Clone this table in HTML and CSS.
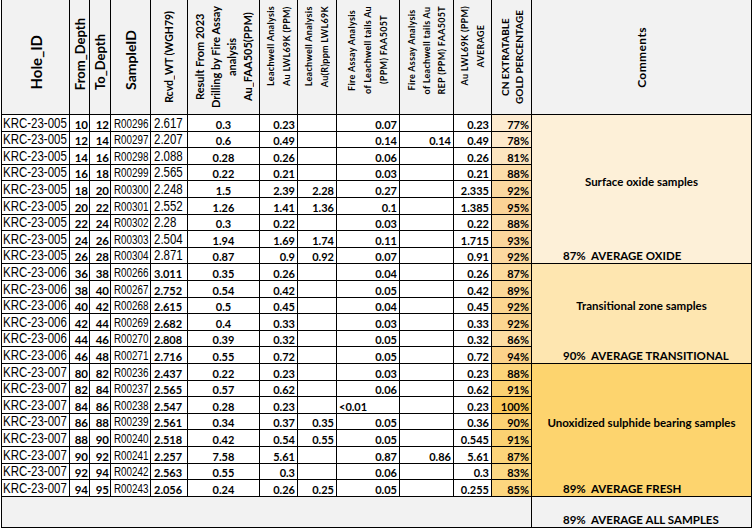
FILE: index.html
```html
<!DOCTYPE html>
<html lang="en">
<head>
<meta charset="utf-8">
<title>Leachwell results</title>
<link rel="stylesheet" href="styles.css">
</head>
<body>
<div class="sheet">
  <div class="h bot"><div class="v s15">Hole_ID</div></div>
  <div class="h bot"><div class="v s13">From_Depth</div></div>
  <div class="h bot"><div class="v s13">To_Depth</div></div>
  <div class="h bot"><div class="v s14">SampleID</div></div>
  <div class="h"><div class="v s105">Rcvd_WT (WGH79)</div></div>
  <div class="h"><div class="v s11 ml">Result From 2023<br>Drilling by Fire Assay<br>analysis<br>Au_FAA505(PPM)</div></div>
  <div class="h top"><div class="v s9 ml">Leachwell Analysis<br>Au LWL69K (PPM)</div></div>
  <div class="h top"><div class="v s9 ml">Leachwell Analysis<br>Au(R)ppm LWL69K</div></div>
  <div class="h top"><div class="v s9 ml">Fire Assay Analysis<br>of Leachwell tails Au<br>(PPM) FAA505T</div></div>
  <div class="h top"><div class="v s9 ml3">Fire Assay Analysis<br>of Leachwell tails Au<br>REP (PPM) FAA505T</div></div>
  <div class="h top"><div class="v s9 ml">Au LWL69K (PPM)<br>AVERAGE</div></div>
  <div class="h"><div class="v s10 ml2">CN EXTRATABLE<br>GOLD PERCENTAGE</div></div>
  <div class="h"><div class="v s12 sp">Comments</div></div>

  <div class="c id"><span>KRC-23-005</span></div><div class="c dp">10</div><div class="c dp">12</div><div class="c sid"><span>R00296</span></div><div class="c wt"><span>2.617</span></div><div class="c res">0.3</div><div class="c n">0.23</div><div class="c n"></div><div class="c n">0.07</div><div class="c n"></div><div class="c n">0.23</div><div class="c pct" style="background:#FDEBD0">77%</div>
  <div class="cm oxide"><div class="lab">Surface oxide samples</div><div class="avg">87%  AVERAGE OXIDE</div></div>
  <div class="c id"><span>KRC-23-005</span></div><div class="c dp">12</div><div class="c dp">14</div><div class="c sid"><span>R00297</span></div><div class="c wt"><span>2.207</span></div><div class="c res">0.6</div><div class="c n">0.49</div><div class="c n"></div><div class="c n">0.14</div><div class="c n">0.14</div><div class="c n">0.49</div><div class="c pct" style="background:#FDE9CB">78%</div>
  <div class="c id"><span>KRC-23-005</span></div><div class="c dp">14</div><div class="c dp">16</div><div class="c sid"><span>R00298</span></div><div class="c wt"><span>2.088</span></div><div class="c res">0.28</div><div class="c n">0.26</div><div class="c n"></div><div class="c n">0.06</div><div class="c n"></div><div class="c n">0.26</div><div class="c pct" style="background:#FCE5C0">81%</div>
  <div class="c id"><span>KRC-23-005</span></div><div class="c dp">16</div><div class="c dp">18</div><div class="c sid"><span>R00299</span></div><div class="c wt"><span>2.565</span></div><div class="c res">0.22</div><div class="c n">0.21</div><div class="c n"></div><div class="c n">0.03</div><div class="c n"></div><div class="c n">0.21</div><div class="c pct" style="background:#FCDDAA">88%</div>
  <div class="c id"><span>KRC-23-005</span></div><div class="c dp">18</div><div class="c dp">20</div><div class="c sid"><span>R00300</span></div><div class="c wt"><span>2.248</span></div><div class="c res">1.5</div><div class="c n">2.39</div><div class="c n">2.28</div><div class="c n">0.27</div><div class="c n"></div><div class="c n">2.335</div><div class="c pct" style="background:#FBD8A0">92%</div>
  <div class="c id"><span>KRC-23-005</span></div><div class="c dp">20</div><div class="c dp">22</div><div class="c sid"><span>R00301</span></div><div class="c wt"><span>2.552</span></div><div class="c res">1.26</div><div class="c n">1.41</div><div class="c n">1.36</div><div class="c n">0.1</div><div class="c n"></div><div class="c n">1.385</div><div class="c pct" style="background:#FBD396">95%</div>
  <div class="c id"><span>KRC-23-005</span></div><div class="c dp">22</div><div class="c dp">24</div><div class="c sid"><span>R00302</span></div><div class="c wt"><span>2.28</span></div><div class="c res">0.3</div><div class="c n">0.22</div><div class="c n"></div><div class="c n">0.03</div><div class="c n"></div><div class="c n">0.22</div><div class="c pct" style="background:#FCDDAA">88%</div>
  <div class="c id"><span>KRC-23-005</span></div><div class="c dp">24</div><div class="c dp">26</div><div class="c sid"><span>R00303</span></div><div class="c wt"><span>2.504</span></div><div class="c res">1.94</div><div class="c n">1.69</div><div class="c n">1.74</div><div class="c n">0.11</div><div class="c n"></div><div class="c n">1.715</div><div class="c pct" style="background:#FBD69C">93%</div>
  <div class="c id"><span>KRC-23-005</span></div><div class="c dp">26</div><div class="c dp">28</div><div class="c sid"><span>R00304</span></div><div class="c wt"><span>2.871</span></div><div class="c res">0.87</div><div class="c n">0.9</div><div class="c n">0.92</div><div class="c n">0.07</div><div class="c n"></div><div class="c n">0.91</div><div class="c pct" style="background:#FBD8A0">92%</div>

  <div class="c id"><span>KRC-23-006</span></div><div class="c dp">36</div><div class="c dp">38</div><div class="c sid"><span>R00266</span></div><div class="c wt b">3.011</div><div class="c res">0.35</div><div class="c n">0.26</div><div class="c n"></div><div class="c n">0.04</div><div class="c n"></div><div class="c n">0.26</div><div class="c pct" style="background:#FCDB9E">87%</div>
  <div class="cm trans"><div class="lab">Transitional zone samples</div><div class="avg">90%  AVERAGE TRANSITIONAL</div></div>
  <div class="c id"><span>KRC-23-006</span></div><div class="c dp">38</div><div class="c dp">40</div><div class="c sid"><span>R00267</span></div><div class="c wt b">2.752</div><div class="c res">0.54</div><div class="c n">0.42</div><div class="c n"></div><div class="c n">0.05</div><div class="c n"></div><div class="c n">0.42</div><div class="c pct" style="background:#FBD898">89%</div>
  <div class="c id"><span>KRC-23-006</span></div><div class="c dp">40</div><div class="c dp">42</div><div class="c sid"><span>R00268</span></div><div class="c wt b">2.615</div><div class="c res">0.5</div><div class="c n">0.45</div><div class="c n"></div><div class="c n">0.04</div><div class="c n"></div><div class="c n">0.45</div><div class="c pct" style="background:#FBD590">92%</div>
  <div class="c id"><span>KRC-23-006</span></div><div class="c dp">42</div><div class="c dp">44</div><div class="c sid"><span>R00269</span></div><div class="c wt b">2.682</div><div class="c res">0.4</div><div class="c n">0.33</div><div class="c n"></div><div class="c n">0.03</div><div class="c n"></div><div class="c n">0.33</div><div class="c pct" style="background:#FBD590">92%</div>
  <div class="c id"><span>KRC-23-006</span></div><div class="c dp">44</div><div class="c dp">46</div><div class="c sid"><span>R00270</span></div><div class="c wt b">2.808</div><div class="c res">0.39</div><div class="c n">0.32</div><div class="c n"></div><div class="c n">0.05</div><div class="c n"></div><div class="c n">0.32</div><div class="c pct" style="background:#FCDDA3">86%</div>
  <div class="c id"><span>KRC-23-006</span></div><div class="c dp">46</div><div class="c dp">48</div><div class="c sid"><span>R00271</span></div><div class="c wt b">2.716</div><div class="c res">0.55</div><div class="c n">0.72</div><div class="c n"></div><div class="c n">0.05</div><div class="c n"></div><div class="c n">0.72</div><div class="c pct" style="background:#FBD28A">94%</div>

  <div class="c id"><span>KRC-23-007</span></div><div class="c dp">80</div><div class="c dp">82</div><div class="c sid"><span>R00236</span></div><div class="c wt b">2.437</div><div class="c res">0.22</div><div class="c n">0.23</div><div class="c n"></div><div class="c n">0.03</div><div class="c n"></div><div class="c n">0.23</div><div class="c pct" style="background:#FCD47A">88%</div>
  <div class="cm fresh"><div class="lab">Unoxidized sulphide bearing samples</div><div class="avg">89%  AVERAGE FRESH</div></div>
  <div class="c id"><span>KRC-23-007</span></div><div class="c dp">82</div><div class="c dp">84</div><div class="c sid"><span>R00237</span></div><div class="c wt b">2.565</div><div class="c res">0.57</div><div class="c n">0.62</div><div class="c n"></div><div class="c n">0.06</div><div class="c n"></div><div class="c n">0.62</div><div class="c pct" style="background:#FBD172">91%</div>
  <div class="c id"><span>KRC-23-007</span></div><div class="c dp">84</div><div class="c dp">86</div><div class="c sid"><span>R00238</span></div><div class="c wt b">2.547</div><div class="c res">0.28</div><div class="c n">0.23</div><div class="c n"></div><div class="c t">&lt;0.01</div><div class="c n"></div><div class="c n">0.23</div><div class="c pct" style="background:#FAC95C">100%</div>
  <div class="c id"><span>KRC-23-007</span></div><div class="c dp">86</div><div class="c dp">88</div><div class="c sid"><span>R00239</span></div><div class="c wt b">2.561</div><div class="c res">0.34</div><div class="c n">0.37</div><div class="c n">0.35</div><div class="c n">0.05</div><div class="c n"></div><div class="c n">0.36</div><div class="c pct" style="background:#FBD174">90%</div>
  <div class="c id"><span>KRC-23-007</span></div><div class="c dp">88</div><div class="c dp">90</div><div class="c sid"><span>R00240</span></div><div class="c wt b">2.518</div><div class="c res">0.42</div><div class="c n">0.54</div><div class="c n">0.55</div><div class="c n">0.05</div><div class="c n"></div><div class="c n">0.545</div><div class="c pct" style="background:#FBD172">91%</div>
  <div class="c id"><span>KRC-23-007</span></div><div class="c dp">90</div><div class="c dp">92</div><div class="c sid"><span>R00241</span></div><div class="c wt b">2.257</div><div class="c res">7.58</div><div class="c n">5.61</div><div class="c n"></div><div class="c n">0.87</div><div class="c n">0.86</div><div class="c n">5.61</div><div class="c pct" style="background:#FCD47A">87%</div>
  <div class="c id"><span>KRC-23-007</span></div><div class="c dp">92</div><div class="c dp">94</div><div class="c sid"><span>R00242</span></div><div class="c wt b">2.563</div><div class="c res">0.55</div><div class="c n">0.3</div><div class="c n"></div><div class="c n">0.06</div><div class="c n"></div><div class="c n">0.3</div><div class="c pct" style="background:#FCD884">83%</div>
  <div class="c id"><span>KRC-23-007</span></div><div class="c dp">94</div><div class="c dp">95</div><div class="c sid"><span>R00243</span></div><div class="c wt b">2.056</div><div class="c res">0.24</div><div class="c n">0.26</div><div class="c n">0.25</div><div class="c n">0.05</div><div class="c n"></div><div class="c n">0.255</div><div class="c pct" style="background:#FCD67F">85%</div>

  <div class="foot"></div>
  <div class="foot cmf"><div class="avg">89%  AVERAGE ALL SAMPLES</div></div>
</div>
</body>
</html>
```
FILE: styles.css
```css
* { box-sizing: border-box; }
html, body { margin: 0; padding: 0; background: #fff; }
body { font-family: Lato, "Liberation Sans", sans-serif; color: #000; }

.sheet {
  display: grid;
  width: 751px;
  margin-left: 1px;
  grid-template-columns: 67px 19px 20px 39px 36px 71px 37px 38px 62px 53px 37px 39px 219px;
  grid-template-rows: 114px 16px 15px 16px 15px 16px 16px 15px 16px 15px 16px 16px 15px 16px 15px 16px 16px 15px 16px 15px 16px 16px 15px 16px 30px;
  gap: 1px;
  padding: 0 1px 1px 1px;
  background: #000;
}

/* header */
.h {
  background: #f2f2f2;
  display: flex;
  justify-content: center;
  align-items: center;
  overflow: hidden;
}
.h.bot { align-items: flex-end; padding-bottom: 24px; }
.h.top { align-items: flex-start; padding-top: 6px; }
.v {
  writing-mode: vertical-rl;
  transform: rotate(180deg);
  text-align: center;
  font-weight: 700;
  white-space: nowrap;
}
.v.ml { line-height: 16px; }
.v.ml2 { line-height: 14px; }
.v.ml3 { line-height: 15px; }
.s15 { font-size: 15px; }
.s14 { font-size: 14px; }
.s13 { font-size: 13px; }
.s12 { font-size: 12px; }
.s11 { font-size: 11px; }
.s105 { font-size: 10.5px; }
.s10 { font-size: 10px; }
.s9 { font-size: 9px; letter-spacing: 0.3px; }
.sp { letter-spacing: 0.4px; }

/* data cells */
.c {
  background: #fff;
  display: flex;
  align-items: flex-end;
  font-size: 11px;
  line-height: 13px;
  font-weight: 700;
  white-space: nowrap;
  overflow: hidden;
}
.id, .sid, .wt {
  font-family: "Liberation Sans", Arial, sans-serif;
  font-weight: 400;
}
.id span, .sid span, .wt span {
  display: inline-block;
  transform: scaleX(0.82);
  transform-origin: left bottom;
  margin-right: -20px;
}
.id { font-size: 14px; line-height: 15px; padding-left: 1px; }
.sid { font-size: 12px; line-height: 14px; padding-left: 3px; }
.wt { font-size: 14px; line-height: 15px; padding-left: 3px; }
.wt.b {
  font-family: Lato, "Liberation Sans", sans-serif;
  font-weight: 700;
  font-size: 11px;
  line-height: 13px;
}
.dp { justify-content: flex-end; padding-right: 1px; font-size: 11.5px; }
.res { justify-content: center; }
.n { justify-content: flex-end; padding-right: 2px; }
.t { justify-content: flex-start; padding-left: 2px; }
.pct { justify-content: flex-end; padding-right: 2px; }

/* comment column */
.cm {
  display: flex;
  flex-direction: column;
  font-size: 11.5px;
  font-weight: 700;
}
.cm .lab {
  flex: 1;
  display: flex;
  align-items: center;
  justify-content: center;
}
.avg {
  height: 16px;
  display: flex;
  align-items: flex-end;
  padding-left: 31px;
  white-space: pre;
  font-size: 11.5px;
  font-weight: 700;
  line-height: 14px;
}
.oxide { grid-row: span 9; background: #FDF0D8; }
.trans { grid-row: span 6; background: #FEE6B0; }
.fresh { grid-row: span 8; background: #FDD46E; }

.foot { background: #f2f2f2; grid-column: 1 / span 12; }
.foot.cmf {
  grid-column: 13;
  display: flex;
  flex-direction: column;
  justify-content: flex-end;
}
```
